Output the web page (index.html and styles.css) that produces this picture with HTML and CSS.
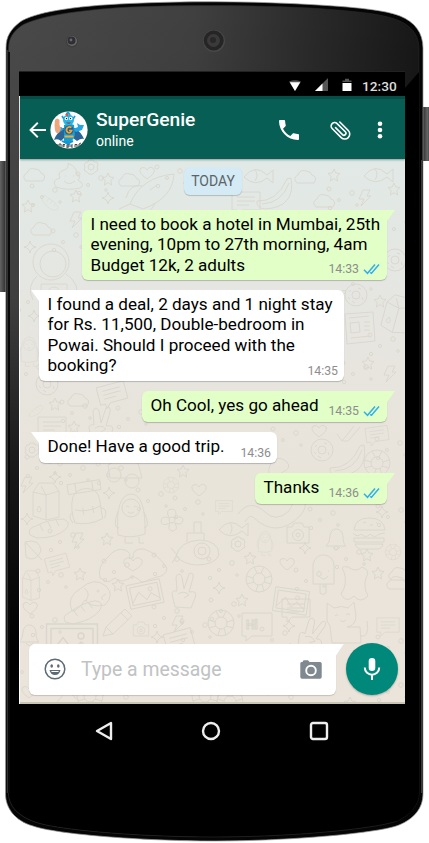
FILE: index.html
```html
<!DOCTYPE html>
<html lang="en">
<head>
<meta charset="utf-8">
<title>SuperGenie chat</title>
<link rel="stylesheet" href="styles.css">
</head>
<body>
<div class="phone">
  <svg class="frame" viewBox="0 0 429 843" aria-hidden="true">
    <defs>
      <linearGradient id="face" x1="0" x2="1"><stop offset="0" stop-color="#4a4a4a"/><stop offset=".45" stop-color="#404040"/><stop offset=".75" stop-color="#292929"/><stop offset="1" stop-color="#171717"/></linearGradient>
      <linearGradient id="shade" x1="0" x2="0" y1="0" y2="1"><stop offset="0" stop-color="#000" stop-opacity="0"/><stop offset=".35" stop-color="#000" stop-opacity=".15"/><stop offset=".55" stop-color="#000" stop-opacity=".65"/><stop offset=".78" stop-color="#000"/></linearGradient>
      <linearGradient id="keyL" x1="0" x2="1"><stop offset="0" stop-color="#777"/><stop offset=".4" stop-color="#555"/><stop offset="1" stop-color="#222"/></linearGradient>
      <linearGradient id="keyR" x1="0" x2="1"><stop offset="0" stop-color="#222"/><stop offset=".6" stop-color="#666"/><stop offset="1" stop-color="#333"/></linearGradient>
    </defs>
    <rect x="-2" y="161" width="9" height="131" rx="1" fill="url(#keyL)"/>
    <rect x="422" y="107" width="9" height="54" rx="1" fill="url(#keyR)"/>
    <path d="M6 48C6 36 11 29 20 22C33 13 70 6 130 3.500C185 1 250 1 310 4.500C355 7 385 10 400 16C415 22 423 33 423 48V794C423 808 414 819 399 825C380 833 290 841 215 841C140 841 55 834 33 826C15 821 5.500 808 5.500 794Z" fill="#050505" stroke="#9a9a9a" stroke-width=".7"/>
    <path d="M8.500 49C8.500 38 13 32 21 26C35 17 75 10 130 7C185 5 250 5 310 8C355 11 383 14 397 20C411 25 419 35 419 49V793C419 805 410 815 397 821C375 829 290 837 215 837C140 837 57 830 35 822C18 816 8.500 806 8.500 793Z" fill="url(#face)"/>
    <path d="M8.500 49C8.500 38 13 32 21 26C35 17 75 10 130 7C185 5 250 5 310 8C355 11 383 14 397 20C411 25 419 35 419 49V793C419 805 410 815 397 821C375 829 290 837 215 837C140 837 57 830 35 822C18 816 8.500 806 8.500 793Z" fill="url(#shade)" stroke="#2a2a2a" stroke-width=".6"/>
    <path d="M405 88L419 72V793C419 805 410 815 397 821L215 836V700H405Z" fill="#000"/>
    <path d="M9 52V793" stroke="#0a0a0a" stroke-width="2"/>
    <path d="M7.300 50V793M421.500 160V793" stroke="#555" stroke-width=".7" fill="none"/>
    <path d="M19 71.500H405" stroke="#222"/>
    <circle cx="72" cy="41.500" r="6" fill="#3d3d3d"/><circle cx="72" cy="41" r="5" fill="#6b6868"/><circle cx="71.500" cy="40.500" r="4" fill="#302e31"/><circle cx="71" cy="40" r="1.400" fill="#66667a"/>
    <circle cx="214" cy="41" r="11" fill="#484848"/><circle cx="213.700" cy="40.500" r="10" fill="#252525"/><circle cx="213.500" cy="40.500" r="6.500" fill="#3b3939"/><circle cx="213" cy="40" r="3" fill="#292828"/>
  </svg>

  <div class="screen">
    <div class="status">
      <svg width="14" height="12" viewBox="0 0 14 12"><path d="M1 1.500Q7-.8 13 1.500L7 11Z" fill="#555"/><path d="M1.800 2.200H12.200L7 11Z" fill="#fff"/></svg>
      <svg width="15" height="14" viewBox="0 0 15 14"><path d="M1 13L14 0V13Z" fill="#555"/><path d="M1 13L8.500 5.500V13Z" fill="#fff"/></svg>
      <svg width="10" height="14" viewBox="0 0 10 14"><path d="M.5 4V2.500H3V.8H7V2.500H9.500V4Z" fill="#555"/><path d="M.5 5H9.500V13H.5Z" fill="#fff"/></svg>
      <span class="clock">12:30</span>
    </div>

    <div class="app">
      <header class="bar">
        <svg class="back" width="17" height="16" viewBox="0 0 17 16"><path d="M17 8H1.500M8.800 .8L1.500 8L8.800 15.200" fill="none" stroke="#fff" stroke-width="1.900"/></svg>
        <svg class="avatar" width="38" height="38" viewBox="0 0 38 38">
          <defs><clipPath id="disc"><circle cx="19" cy="19" r="18.600"/></clipPath></defs>
          <circle cx="19" cy="19" r="18.600" fill="#fff"/>
          <g clip-path="url(#disc)">
            <path d="M13 17Q6 23 4 29Q8 27 11 30L15 26L23 27L27 30Q31 27 34 28Q31 21 25 17Z" fill="#2a6598"/>
            <path d="M14 14Q19 11 24 14L25 24Q23 31 18 31Q22 33 20 34Q13 34 14 28Z" fill="#159ed6"/>
            <path d="M23 18L28 16L27 12L30 14L34 14L32 19L26 21Z" fill="#20a6e2"/>
            <path d="M14 18L10 21L8 17L11 16Z" fill="#25a9df"/>
            <circle cx="18.500" cy="9" r="5.500" fill="#22b7e8"/>
            <path d="M12 5L14 8M25 5L23 8M16 4L18 1L20 4" stroke="#22a0d4" stroke-width="1.800" fill="none"/>
            <circle cx="16.400" cy="7.500" r="1.700" fill="#fff"/><circle cx="20.800" cy="7.500" r="1.700" fill="#fff"/><circle cx="16.600" cy="7.600" r=".7"/><circle cx="20.500" cy="7.600" r=".7"/>
            <circle cx="17" cy="3.800" r="1.300" fill="#e8502e"/><path d="M16 11.500Q18.500 14 21 11.500Z" fill="#c72a2a"/>
            <path d="M5 9Q7 6 9.500 9V14L11 18L9 22Q6 23 5 19L4.500 14Z" fill="#efa67a"/>
            <circle cx="19" cy="19" r="4.600" fill="#245f92"/><path d="M21.500 16.500Q19 14.800 17 17Q15.500 20 18 21.500Q20.500 22.500 21.700 19.500H19" fill="none" stroke="#f2a52e" stroke-width="1.700"/>
            <path d="M14.500 24.500H23.500V26.500H14.500Z" fill="#f0ae32"/>
            <path d="M12 30Q17 33 23 30" stroke="#1496cc" stroke-width="2" fill="none"/>
            <path d="M7 33V35.500M9 35V33H11V36M13 36V33.500H15M13 35H15M17 37V34H19V36H17M21 34H23M21 36H23M21 34V36M25 36V33.500H27V36M29 35V33L31 32" stroke="#333" stroke-width=".9" fill="none"/>
          </g>
        </svg>
        <div class="who"><div class="name">SuperGenie</div><div class="state">online</div></div>
        <svg class="call" width="20" height="20" viewBox="3 3 18 18"><path fill="#fff" d="M6.620 10.790c1.440 2.830 3.760 5.140 6.590 6.590l2.200-2.200c.27-.27.67-.36 1.020-.24 1.120.37 2.330.57 3.570.57.550 0 1 .45 1 1V20c0 .55-.45 1-1 1-9.390 0-17-7.610-17-17 0-.55.45-1 1-1h3.500c.550 0 1 .45 1 1 0 1.250.2 2.450.57 3.570.110.350.030.740-.25 1.020l-2.200 2.200z"/></svg>
        <svg class="clip" width="24" height="24" viewBox="0 0 24 24"><g transform="rotate(-45 12 12)" fill="none" stroke="#fff" stroke-width="1.600" stroke-linecap="round"><path d="M16.800 5.500V17.500A5 5 0 0 1 6.800 17.500V4.700A3.500 3.500 0 0 1 13.800 4.700V16.300A2 2 0 0 1 9.800 16.300V6.500"/></g></svg>
        <svg class="more" width="6" height="18" viewBox="0 0 6 18" fill="#fff"><circle cx="3" cy="2.700" r="2.300"/><circle cx="3" cy="9" r="2.300"/><circle cx="3" cy="15.300" r="2.300"/></svg>
      </header>

      <main class="chat">
        <svg class="doodles" viewBox="20 159 385 543" aria-hidden="true">
          <defs>
            <path id="star" d="M0-6L1.800-2L6-1.500L2.800 1.500L3.600 6L0 3.700L-3.600 6L-2.800 1.500L-6-1.500L-1.800-2Z"/>
            <path id="spark" d="M0-6Q.8-.8 6 0Q.8.8 0 6Q-.8.800-6 0Q-.8-.8 0-6Z"/>
            <path id="cloud" d="M-8 6Q-13 1-7-2Q-5-8 1-6Q6-6 7-2Q13 0 9 6Z"/>
            <g id="gear"><circle r="3"/><path d="M-2-7H2L3-5L6-5L7-2L6 0L7 3L4 5L2 7H-2L-4 5L-7 3L-6 0L-7-2L-5-5L-3-5Z"/></g>
            <g id="burger"><path d="M-15-3Q-14-15 0-15Q15-15 16-3ZM-16 0Q-12 5-8 1Q-3 6 1 1Q6 6 10 1L16 0M-15 5H15V9H-15ZM-14 11H14Q13 16 8 16H-9Q-13 15-14 11Z"/><path d="M-6-10L-3-11M1-8L4-8M7-11L9-9"/></g>
            <g id="camera"><path d="M-11-6H-6L-4-10H4L6-6H11V10H-11Z"/><circle cy="2" r="5.500"/><circle cy="2" r="2"/></g>
            <g id="flower"><circle r="3"/><path d="M-3-2Q-7-11 0-11Q6-10 3-2Q11-5 11 0Q10 6 3 3Q7 11 0 11Q-5 10-2 3Q-11 7-11 1Q-10-5-3-2Z"/></g>
            <g id="pic"><path d="M-17-12H17V12H-17ZM-14-9H14V9H-14ZM-14 7L-6-3L1 6L6 0L14 7"/><circle cx="6" cy="-4" r="2"/></g>
            <g id="note"><path d="M-14-9H14V9H-4L-9 14V9H-14ZM-9-4H9M-9 0H9M-9 4H3"/></g>
            <g id="pack"><path d="M-14 18Q-17 4-12-8Q-7-16 4-14Q14-12 14-1V18Q0 23-14 18ZM-16-21H17V-11H-16ZM-8-21V-11M9-21V-11M-12 5Q0 10 14 5M-4 4V11M6 4V11M-14 7Q-21 9-16 18M14 7Q21 9 16 18"/></g>
            <g id="yeti"><path d="M-13 19Q-16-21 0-22Q15-22 14 18Q0 23-13 19ZM-13-5Q-19 12-12 12M13-4Q20 11 13 12M-6 21V27H2M8 21V27H13"/><circle cy="-8" r="9"/><path d="M-5-9Q-4-11-2-9M3-9Q5-11 6-9M-3-4Q0-1 3-4"/></g>
            <path id="carton" d="M-13-10L-7-19H7L13-11V15L0 18L-13 14ZM-13-10L0-7L13-11M0-7V18M0-7L-5-16M-7 4Q-11 9-7 10Q-3 9-7 4"/>
            <g id="loaf"><path d="M-19 7Q-22 0-13-2Q0-9 14-9Q23-6 17 1Q8 10-12 10ZM-9-3L-6 3M-1-6L2 0M7-8L10-2"/></g>
            <g id="sub"><path d="M-21 6Q-17-9 3-10Q22-9 22 5Q18 15-1 15Q-14 14-21 6ZM-10-8V-17H7V-10M-3-17V-28H4V-17M-20 5L-26-2M-20 5L-25 13"/><circle cx="5" cy="1" r="8"/><circle cx="5" cy="1" r="4"/></g>
            <path id="hands" d="M-33 16Q-36 4-25-5Q-17-15-8-12Q-1-9-4-4L0-4Q-1-14 11-13Q24-9 34 6Q33 14 24 15L15 18Q9 22 5 17L0 14Q-12 23-18 16L-25 20ZM0 9Q-13 2-8-3Q-3-6 0-1Q4-7 9-2Q11 3 0 9"/>
            <g id="dog"><path d="M-19 17Q-25 3-11-5Q3-18 15-8Q24 1 14 11Q0 14-6 6Q-13 17-19 17ZM-7-6Q0-2-5 7"/><circle cx="7" cy="-3" r="1"/><path d="M15 0Q8 3 12 6"/></g>
            <path id="peace" d="M-9 17L-12 4Q-12 0-7 1L-8-13Q-5-19-2-13L0-1L5-16Q10-19 9-12L5 2Q14 0 11 8L7 18ZM-6 4Q0 0 5 5L0 8"/>
            <g id="astro"><circle r="18"/><circle cx="2" cy="2" r="13"/><path d="M-14 14Q-25 25-18 38M15 12Q30 22 25 38M-10 22H16V40H-10Z"/><circle cx="3" cy="31" r="6"/></g>
            <path id="rocket" d="M-20 14Q-9-13 24-16Q23 8-7 19ZM-20 14L-31 19M-8-4Q-20-7-24 8M5 13Q0 26-12 22M0 0L7-5"/>
            <path id="poo" d="M-13 10Q-18 3-9 1Q-12-5-5-7Q0-8-1-14Q9-9 7-4Q13-1 9 3Q17 8 11 11Q-2 14-13 10ZM-5 4Q0 9 6 4M-4-1H-3M4-1H5"/>
            <path id="bolt" d="M-2-8L5-8L2-2H6L-4 8L-1 1H-6Z"/>
            <path id="banana" d="M-20 8Q0 9 10-14L14-15Q19 14-12 16Q-21 15-20 8ZM-15 11Q5 10 12-10"/>
            <g id="donut"><circle r="11"/><circle r="4"/><path d="M-7-3L-5-5M2-7L5-6M6 2L7 5M-4 6L-1 8M-8 2L-6 4"/></g>
            <g id="paper"><path d="M-15-14L13-16L15 13L-13 16ZM-11-10L9-12M-10-5L-1-6L0 4L-9 5ZM4-6L10-6M4-2L10-2M4 2L10 2M-9 10L10 8"/></g>
            <g id="cat"><path d="M-15 5L-15-13L-8-8Q0-11 6-8L12-14L14 0Q14 9 5 11L18 11L19 27H-10L-12 10ZM-7 0Q-5-3-4 0M4-1Q6-4 8-1M-2 4L1 6L4 4M18 20Q28 22 25 5"/></g>
            <path id="pop" d="M-10 10V-10Q-7-20 2-19Q11-17 11-8V10ZM-3 10V19Q0 22 3 19V10M-5-3H-4M5-3H6M-4 2Q1 8 5 2"/>
            <path id="snake" d="M-32 9Q-20-7-5 7Q6 18 19 6Q31-12 7-22Q-6-28 1-42Q8-51 17-43Q22-37 13-33Q3-29 18-20Q45-6 30 11Q7 34-16 13Q-20 8-25 17"/>
            <path id="splat" d="M-11-12Q-16-19-7-17Q1-11 7-17Q16-14 11-6Q8 3 13 12Q5 20-1 12Q-9 20-14 10Q-7 0-11-12Z"/>
            <g id="ring"><circle r="13"/><circle r="6"/><path d="M-5-12L-2-6M5-12L2-6M12-3L6-1M12 5L5 3M-12-3L-6-1M-12 5L-5 3M-3 12L-1 6M5 12L3 5"/></g>
            <g id="dots"><circle cx="-13" cy="-9" r="2"/><circle cx="-3" cy="2" r="1.500"/><circle cx="10" cy="-5" r="2.300"/><circle cx="15" cy="7" r="1.300"/><circle cx="-12" cy="10" r="1.700"/></g>
            <path id="heart" d="M0 6Q-10-1-6-5Q-2-7 0-3Q3-8 7-4Q9 0 0 6Z"/>
            <path id="pencil" d="M-15 12L-12 3L7-15L14-8L-5 10ZM-12 3L-5 10M3-11L10-4"/>
            <path id="fish" d="M-11 2Q0-12 12 0L18-5V8L12 3Q0 13-11 2ZM0-5Q4 0 0 6"/>
            <path id="bell" d="M-10 7Q-6 4-6-3Q-5-10 0-10Q6-10 7-3Q7 5 10 7ZM-3 8Q0 13 4 8"/>
          </defs>
          <g class="ink">
            <use href="#cloud" x="34" y="175"/><use href="#poo" x="69" y="177"/><use href="#gear" x="91" y="167"/><use href="#star" x="108" y="179"/><use href="#cloud" x="129" y="180"/><use href="#heart" x="147" y="173"/><use href="#rocket" x="150" y="190"/><use href="#star" x="76" y="196"/><use href="#spark" x="108" y="198"/><use href="#star" x="28" y="206"/><use href="#loaf" transform="translate(50 203) rotate(55) scale(.5)"/><use href="#cloud" x="41" y="229"/><use href="#bolt" x="76" y="220"/><use href="#spark" x="30" y="247"/><use href="#astro" x="51" y="262"/><use href="#spark" x="34" y="316"/><use href="#yeti" transform="translate(29 350) scale(.6)"/>
            <use href="#dots" x="45" y="195"/><use href="#dots" x="91" y="183"/><use href="#dots" x="66" y="240"/><use href="#dots" x="31" y="300"/><use href="#dots" x="29" y="372"/><use href="#dots" x="170" y="176"/>
            <use href="#fish" x="255" y="175"/><use href="#cloud" x="305" y="177"/><use href="#star" x="334" y="175"/><use href="#fish" x="375" y="174"/><use href="#star" x="394" y="189"/><use href="#banana" x="277" y="193"/><use href="#cloud" x="324" y="201"/><use href="#bolt" x="365" y="198"/><use href="#note" x="246" y="201"/><use href="#donut" x="395" y="260"/><use href="#dots" x="342" y="198"/><use href="#dots" x="397" y="227"/><use href="#donut" x="356" y="295"/><use href="#star" x="380" y="301"/><use href="#paper" x="360" y="328"/><use href="#carton" transform="translate(397 315) rotate(15)"/><use href="#star" x="368" y="363"/><use href="#bolt" x="390" y="374"/><use href="#dots" x="383" y="344"/><use href="#dots" x="356" y="372"/><use href="#dots" x="356" y="282"/>
            <use href="#donut" x="47" y="384"/><use href="#cloud" x="78" y="400"/><use href="#note" transform="translate(112 393) rotate(-15)"/><use href="#star" x="55" y="404"/><use href="#loaf" transform="translate(36 411) rotate(-20) scale(.4)"/><use href="#note" x="52" y="426"/><use href="#star" x="74" y="427"/><use href="#peace" x="101" y="424"/><use href="#gear" x="32" y="450"/><use href="#dots" x="75" y="411"/><use href="#dots" x="131" y="417"/><use href="#dots" x="40" y="466"/>
            <use href="#bolt" x="27" y="485"/><use href="#spark" x="55" y="477"/><use href="#pack" transform="translate(86 503) rotate(-9)"/><use href="#carton" x="46" y="502"/><use href="#spark" x="109" y="493"/><use href="#yeti" x="131" y="516"/><use href="#loaf" x="49" y="528"/><use href="#ring" transform="translate(171 485) scale(.6)"/><use href="#star" x="183" y="471"/><use href="#heart" x="199" y="490"/><use href="#flower" x="172" y="520"/><use href="#dots" x="73" y="473"/><use href="#dots" x="151" y="499"/><use href="#dots" x="188" y="507"/><use href="#dots" x="63" y="540"/><use href="#dots" x="111" y="473"/>
            <path d="M108 465Q120 457 138 463L142 478H110Z"/><circle cx="114" cy="475" r="7"/><circle cx="132" cy="481" r="7"/>
            <path d="M25 542Q40 538 41 551Q35 563 26 557ZM26 543L42 560"/><use href="#bolt" x="78" y="541"/><use href="#star" x="107" y="539"/><use href="#note" transform="translate(57 563) rotate(-15) scale(.8)"/><use href="#star" x="80" y="574"/><use href="#hands" x="133" y="562"/><use href="#sub" x="197" y="550"/><use href="#dog" x="91" y="594"/><use href="#pic" transform="translate(145 594) rotate(-12)"/><use href="#peace" x="184" y="590"/><use href="#star" x="118" y="585"/><use href="#carton" transform="translate(31 586) scale(.65 .8)"/><use href="#heart" x="30" y="608"/><use href="#dots" x="51" y="580"/><use href="#dots" x="117" y="570"/><use href="#spark" x="27" y="519"/><use href="#dots" x="167" y="564"/>
            <use href="#donut" x="322" y="450"/><use href="#heart" x="319" y="431"/><use href="#note" transform="translate(377 434) rotate(-8) scale(.8)"/><use href="#banana" x="350" y="460"/><use href="#ring" x="377" y="463"/><path d="M337 434L342 441L354 426M343 441L348 441L360 427"/><use href="#snake" x="270" y="505"/><use href="#dots" x="286" y="438"/><use href="#dots" x="390" y="448"/><use href="#fish" x="230" y="528"/><use href="#note" transform="translate(224 506) scale(.6)"/><use href="#gear" x="238" y="544"/><use href="#camera" x="298" y="533"/><use href="#burger" x="369" y="533"/><use href="#bell" x="336" y="539"/><use href="#spark" x="382" y="512"/><use href="#spark" x="305" y="548"/><use href="#star" x="367" y="555"/><use href="#ring" transform="translate(393 552) scale(.6)"/><use href="#star" x="250" y="558"/><use href="#yeti" transform="translate(265 542) scale(.5)"/><use href="#ring" x="259" y="579"/><use href="#pop" x="323" y="574"/><use href="#splat" x="355" y="584"/><use href="#star" x="378" y="573"/><use href="#cloud" x="397" y="583"/><use href="#cloud" x="399" y="574"/><use href="#pic" transform="translate(291 601) rotate(8)"/><use href="#heart" x="287" y="564"/><use href="#star" x="242" y="600"/><use href="#spark" x="219" y="588"/><use href="#dots" x="323" y="518"/><use href="#dots" x="349" y="557"/><use href="#dots" x="309" y="579"/><use href="#dots" x="222" y="568"/><use href="#dots" x="391" y="515"/><use href="#dots" x="224" y="609"/>
            <use href="#bell" x="29" y="635"/><use href="#pic" transform="translate(72 642) scale(1.500)"/><use href="#loaf" transform="translate(83 612) rotate(-10)"/><use href="#pencil" x="118" y="624"/><use href="#camera" transform="translate(141 629) scale(.7)"/><use href="#bolt" x="178" y="624"/><use href="#spark" x="157" y="637"/><use href="#note" transform="translate(179 640) rotate(-15)"/><use href="#ring" x="221" y="623"/><path d="M242 613H272V636H252L246 641V636H242Z"/><text x="246" y="629">Hi</text><use href="#note" x="296" y="608"/><use href="#spark" x="289" y="626"/><use href="#peace" transform="translate(312 635) rotate(20)"/><use href="#cat" x="342" y="616"/><use href="#note" transform="translate(388 625) scale(.8)"/><use href="#dots" x="167" y="616"/><use href="#dots" x="195" y="630"/><use href="#dots" x="45" y="625"/><use href="#dots" x="275" y="638"/><use href="#dots" x="391" y="646"/>
            <use href="#heart" x="29" y="692"/><use href="#cloud" x="68" y="700"/><use href="#ring" x="90" y="696"/><use href="#dots" x="116" y="702"/><use href="#ring" x="205" y="696"/><use href="#dots" x="281" y="702"/><use href="#ring" x="230" y="702"/><use href="#star" x="350" y="703"/><use href="#dots" x="391" y="690"/><use href="#dots" x="25" y="670"/>
          </g>
        </svg>
        <div class="messages">
          <div class="day">TODAY</div>
          <div class="msg out three"><p>I need to book a hotel in Mumbai, 25th<br>evening, 10pm to 27th morning, 4am<br>Budget 12k, 2 adults</p><span class="meta">14:33<svg class="ticks" width="17" height="12" viewBox="0 0 17 12"><path d="M1 6.800L4.500 10.300L12 1.500M7.200 9.300L8.500 10.300L16 1.500"/></svg></span></div>
          <div class="msg in four"><p>I found a deal, 2 days and 1 night stay<br>for Rs. 11,500, Double-bedroom in<br>Powai. Should I proceed with the<br>booking?</p><span class="meta">14:35</span></div>
          <div class="msg out cool"><p>Oh Cool, yes go ahead</p><span class="meta">14:35<svg class="ticks" width="17" height="12" viewBox="0 0 17 12"><path d="M1 6.800L4.500 10.300L12 1.500M7.200 9.300L8.500 10.300L16 1.500"/></svg></span></div>
          <div class="msg in done"><p>Done! Have a good trip.</p><span class="meta">14:36</span></div>
          <div class="msg out thanks"><p>Thanks</p><span class="meta">14:36<svg class="ticks" width="17" height="12" viewBox="0 0 17 12"><path d="M1 6.800L4.500 10.300L12 1.500M7.200 9.300L8.500 10.300L16 1.500"/></svg></span></div>
        </div>
        <div class="compose">
          <div class="entry">
            <svg width="22" height="22" viewBox="0 0 22 22"><circle cx="11" cy="11" r="9.800" fill="none" stroke="#5c6b75" stroke-width="1.500"/><ellipse cx="7.700" cy="8" rx="1.300" ry="1.800" fill="#5c6b75"/><ellipse cx="14.300" cy="8" rx="1.300" ry="1.800" fill="#5c6b75"/><path d="M5.500 12H16.500Q15.500 17 11 17T5.500 12Z" fill="#5c6b75"/><path d="M7.200 13.100H14.800L14.300 14H7.700Z" fill="#fff"/></svg>
            <span class="hint">Type a message</span>
            <svg width="22" height="19" viewBox="0 0 22 19"><path d="M1.500 2H2.500L3.500.3H8L9.500 2H20Q21.700 2 21.700 3.500V17Q21.700 18.700 20 18.700H2Q.3 18.700.3 17V3.500Q.3 2 1.500 2Z" fill="#7f898f"/><circle cx="11" cy="10.500" r="4.800" fill="none" stroke="#fff" stroke-width="1.900"/></svg>
          </div>
          <div class="mic"><svg width="18" height="24" viewBox="0 0 18 24"><rect x="5.700" y="1" width="6.600" height="13" rx="3.300" fill="#fff"/><path d="M1.800 10.500C1.800 20 16.200 20 16.200 10.500M9 17.500V23" fill="none" stroke="#fff" stroke-width="2"/></svg></div>
        </div>
      </main>
    </div>

    <nav class="keys">
      <svg width="18" height="20" viewBox="0 0 18 20"><path d="M2 10L16 2V18Z"/></svg>
      <svg width="20" height="20" viewBox="0 0 20 20"><circle cx="10" cy="10" r="8"/></svg>
      <svg width="20" height="20" viewBox="0 0 20 20"><rect x="2" y="2" width="16" height="16" rx="2"/></svg>
    </nav>
  </div>
</div>
</body>
</html>
```
FILE: styles.css
```css
body { margin: 0; background: #fff; font-family: Roboto, "Liberation Sans", sans-serif; }
svg { display: block; flex: none; }
p { margin: 0; }
.phone { position: relative; width: 429px; height: 843px; overflow: hidden; }
.frame { position: absolute; inset: 0; width: 429px; height: 843px; }
.screen { position: relative; width: 386px; padding: 72px 0 0 19px; }

.status { height: 24px; display: flex; align-items: center; justify-content: flex-end; background: #000; padding-right: 8px; box-sizing: border-box; color: #ddd; }
.status svg:nth-child(1) { margin-right: 12px; margin-top: 3px; }
.status svg:nth-child(2) { margin-right: 13px; }
.status svg:nth-child(3) { margin-right: 10px; }
.status svg:nth-child(2), .status svg:nth-child(3) { margin-top: 2px; }
.clock { width: 35px; margin-top: 4px; font-size: 13.700px; font-weight: 500; white-space: nowrap; }

.app { height: 608px; display: flex; flex-direction: column; border-left: 1px solid #fff; }
.bar { height: 63px; box-sizing: border-box; display: flex; align-items: center; background: #075e54; border-top: 3px solid #064e45; padding: 1px 22px 0 9px; flex: none; box-shadow: 0 1px 2px rgba(0,0,0,.35); position: relative; z-index: 1; }
.avatar { margin-left: 4px; }
.who { margin-left: 8px; flex: 1; color: #fff; }
.name { font-size: 19.200px; font-weight: 500; line-height: 23px; }
.state { font-size: 14px; line-height: 20px; }
.call { margin-right: 30px; }
.clip { margin-right: 24px; }
.more { margin-right: 0; }

.chat { position: relative; flex: 1; display: flex; flex-direction: column; justify-content: space-between; background: linear-gradient(#e1e9e6, #e7e5df 35%, #e9e4da 60%, #ebe4da); border-bottom: 2px solid #c9c5b5; }
.doodles { position: absolute; inset: 0; width: 100%; height: 100%; overflow: hidden; }
.ink { fill: none; stroke: #d9d6cd; stroke-width: .9; }
.ink text { font: 700 12px Roboto, sans-serif; }
.messages { position: relative; display: flex; flex-direction: column; padding: 8px 18px 0 19px; }
.day { align-self: center; width: 58px; height: 28px; margin-bottom: 15px; border-radius: 6px; background: #d4eaf4; box-shadow: 0 1px 1px rgba(0,0,0,.2); color: #5c6468; font-size: 14px; line-height: 28px; text-align: center; }
.msg { position: relative; box-sizing: border-box; margin-bottom: 10px; padding: 4px 8px 5px 8.500px; border-radius: 6px; box-shadow: 0 1px 1px rgba(0,0,0,.22); color: #000; font-size: 17.100px; line-height: 20.300px; white-space: nowrap; }
.msg::after { content: ""; position: absolute; top: 0; width: 14px; height: 11px; }
.out { align-self: flex-end; background: #e1ffc7; }
.out::after { right: -8px; background: #e1ffc7; clip-path: polygon(0 0, 100% 0, 6px 100%, 0 100%); }
.in { align-self: flex-start; background: #fff; }
.in::after { left: -8px; background: #fff; clip-path: polygon(0 0, 100% 0, 100% 100%, 8px 100%); }
.three { width: 305px; height: 70px; }
.four { width: 305px; height: 91px; }
.cool { width: 245px; height: 31px; }
.done { width: 238px; height: 31px; }
.thanks { width: 132px; height: 31px; }
.meta { position: absolute; right: 7px; bottom: 3px; display: flex; align-items: center; gap: 4px; color: #8d8d8d; font-size: 12.300px; line-height: 16px; }
.in .meta { right: 6px; bottom: 2px; }
.ticks { fill: none; stroke: #35aeea; stroke-width: 1.500; }

.compose { position: relative; display: flex; align-items: center; padding: 0 7px 7px 9px; justify-content: space-between; }
.entry { position: relative; width: 307px; height: 51px; box-sizing: border-box; display: flex; align-items: center; padding: 0 14px 0 15px; border-radius: 6px; background: #fff; box-shadow: 0 1px 1px rgba(0,0,0,.16); }
.entry::after { content: ""; position: absolute; top: 0; right: -8px; width: 14px; height: 12px; background: #fff; clip-path: polygon(0 0, 100% 0, 6px 100%, 0 100%); }
.hint { flex: 1; margin-left: 15px; color: #c0c2c3; font-size: 19.400px; }
.mic { width: 52px; height: 52px; border-radius: 50%; background: #00897b; display: flex; align-items: center; justify-content: center; box-shadow: 0 1px 2px rgba(0,0,0,.25); }

.keys { height: 54px; display: flex; align-items: center; background: #000; padding-left: 76px; }
.keys svg { fill: none; stroke: #eee; stroke-width: 2.400; stroke-linejoin: round; }
.keys svg + svg { margin-left: 88px; }
```
